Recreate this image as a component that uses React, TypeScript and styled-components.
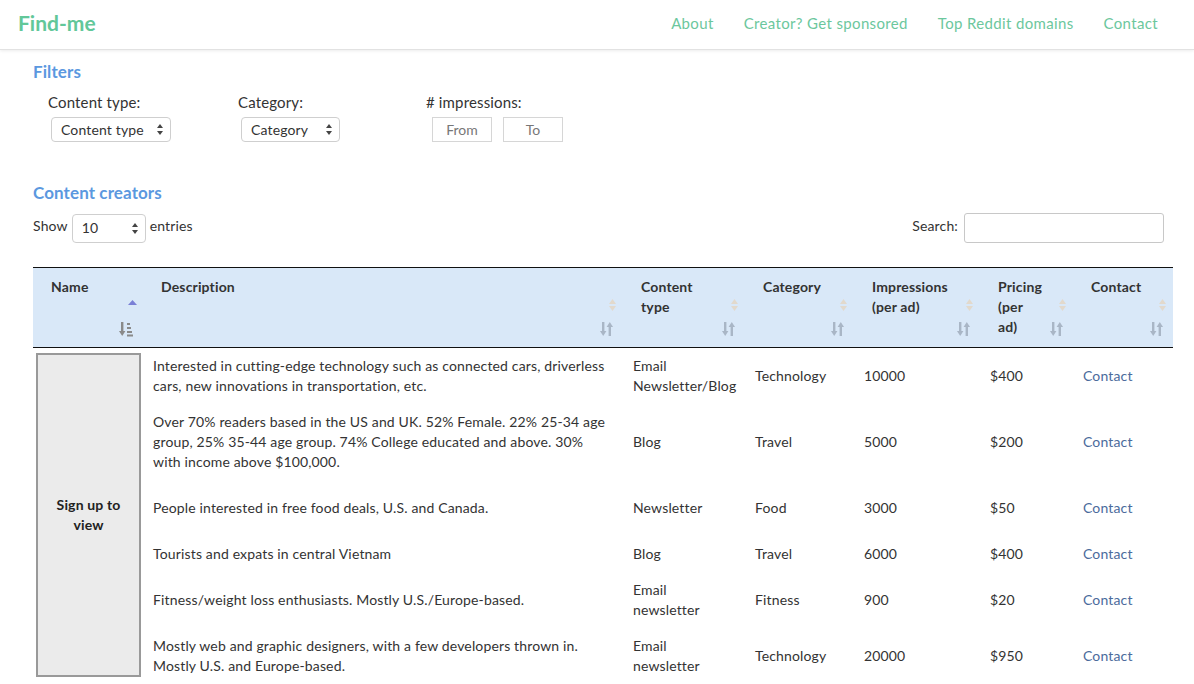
import React from "react";
import styled, { createGlobalStyle } from "styled-components";

const Global = createGlobalStyle`
  html, body { margin: 0; padding: 0; background: #fff; }
  body { font-family: Lato, "Open Sans", "Liberation Sans", sans-serif; color: #333; letter-spacing: 0.15px; }
  * { box-sizing: border-box; }
`;

const TopBar = styled.header`
  height: 50px;
  display: flex;
  align-items: center;
  justify-content: space-between;
  padding: 0 36px 0 18px;
  border-bottom: 1px solid #e2e2e2;
  box-shadow: 0 1px 3px rgba(0, 0, 0, 0.08);
`;

const Logo = styled.div`
  font-size: 21px;
  font-weight: 700;
  color: #62c799;
  letter-spacing: 0;
  margin-top: -4px;
`;

const Nav = styled.nav`
  display: flex;
  gap: 30px;
  margin-top: -4px;
`;

const NavLink = styled.a`
  font-size: 15px;
  letter-spacing: 0.35px;
  color: #6cc79d;
  text-decoration: none;
`;

const Main = styled.main`
  padding: 0 21px 0 33px;
`;

const SectionTitle = styled.h2<{ $top: number }>`
  margin: ${(p) => p.$top}px 0 0 0;
  font-size: 17px;
  line-height: 20px;
  font-weight: 700;
  letter-spacing: 0.1px;
  color: #5b98df;
`;

const FilterRow = styled.div`
  display: flex;
  padding-left: 15px;
  margin-top: 10px;
`;

const FilterGroup = styled.div<{ $w: number }>`
  width: ${(p) => p.$w}px;
  display: flex;
  flex-direction: column;
  gap: 5px;
`;

const FilterLabel = styled.div`
  font-size: 15px;
  line-height: 20px;
  color: #333;
`;

const SelectBox = styled.div<{ $w: number; $h: number; $pad: number; $ml?: number }>`
  width: ${(p) => p.$w}px;
  height: ${(p) => p.$h}px;
  margin-left: ${(p) => p.$ml ?? 3}px;
  border: 1.5px solid #cfcfcf;
  border-radius: 4px;
  background: #fff;
  display: flex;
  align-items: center;
  justify-content: space-between;
  padding: 0 7px 0 ${(p) => p.$pad}px;
  font-size: 14px;
  color: #333;
`;

const Stepper = () => (
  <svg width="6" height="11" viewBox="0 0 6 11">
    <path d="M3 0 L6 4 L0 4 Z" fill="#444" />
    <path d="M3 11 L6 7 L0 7 Z" fill="#444" />
  </svg>
);

const RangeRow = styled.div`
  display: flex;
  gap: 11px;
  margin-left: 6px;
`;

const RangeInput = styled.input`
  width: 60px;
  height: 25px;
  border: 1.5px solid #d6d6d6;
  border-radius: 0;
  text-align: center;
  font-family: inherit;
  font-size: 14px;
  padding: 0;
  &::placeholder { color: #777; }
`;

const ToolRow = styled.div`
  display: flex;
  align-items: center;
  justify-content: space-between;
  margin-top: 10px;
  padding-right: 9px;
  font-size: 14px;
  line-height: 18px;
`;

const LengthCtl = styled.div`
  display: flex;
  align-items: center;
  gap: 4px;
  & > span { margin-top: -4px; }
`;

const SearchCtl = styled.label`
  display: flex;
  align-items: center;
  gap: 6px;
  & > span { margin-top: -4px; }
`;

const SearchInput = styled.input`
  width: 200px;
  height: 30px;
  border: 1px solid #c8c8c8;
  border-radius: 3px;
`;

const Table = styled.table`
  width: 100%;
  margin-top: 24px;
  border-collapse: collapse;
  table-layout: fixed;
  font-size: 14px;
`;

const HeadRow = styled.tr`
  background: #d9e8f8;
  border-top: 1px solid #111;
  border-bottom: 1px solid #111;
`;

const Th = styled.th`
  position: relative;
  text-align: left;
  vertical-align: top;
  padding: 9px 18px 10px;
  height: 79px;
  font-weight: 700;
  line-height: 20px;
  color: #333;
`;

const SortTri = styled.span`
  position: absolute;
  right: 6px;
  top: 31px;
  display: flex;
`;

const SortIcon = styled.span`
  position: absolute;
  right: 10px;
  bottom: 10px;
  display: flex;
`;

const Td = styled.td<{ $pad?: number }>`
  padding: ${(p) => p.$pad ?? 8}px 10px;
  vertical-align: middle;
  line-height: 20px;
  color: #333;
`;

const NameCell = styled.td`
  padding: 5px 2px 6px 3px;
  vertical-align: top;
`;

const SignUpBox = styled.div`
  height: 324px;
  background: #ebebeb;
  border: 2px solid #999;
  display: flex;
  align-items: center;
  justify-content: center;
  text-align: center;
  font-weight: 700;
  line-height: 20px;
  color: #222;
  padding: 0 10px;
`;

const ContactLink = styled.a`
  color: #4b6b9c;
  text-decoration: none;
`;

const TriPair = ({ active }: { active?: boolean }) =>
  active ? (
    <svg width="9" height="12" viewBox="0 0 9 12">
      <path d="M4.5 1 L9 6 L0 6 Z" fill="#7a80d6" />
    </svg>
  ) : (
    <svg width="9" height="12" viewBox="0 0 9 12">
      <path d="M4.5 0 L8 5 L1 5 Z" fill="#e2d9cc" />
      <path d="M4.5 12 L8 7 L1 7 Z" fill="#e2d9cc" />
    </svg>
  );

const SortGlyph = ({ active }: { active?: boolean }) =>
  active ? (
    <svg width="14" height="16" viewBox="0 0 14 16">
      <rect x="2" y="1" width="2.4" height="11" fill="#8a8a8a" />
      <path d="M0 10 L6.4 10 L3.2 15 Z" fill="#8a8a8a" />
      <rect x="8" y="2" width="3" height="2" fill="#8a8a8a" />
      <rect x="8" y="6" width="4" height="2" fill="#8a8a8a" />
      <rect x="8" y="10" width="5" height="2" fill="#8a8a8a" />
      <rect x="8" y="13.5" width="6" height="2" fill="#8a8a8a" />
    </svg>
  ) : (
    <svg width="13" height="16" viewBox="0 0 13 16">
      <rect x="2" y="1" width="2.4" height="10" fill="#a9b6c6" />
      <path d="M0 10 L6.4 10 L3.2 15 Z" fill="#a9b6c6" />
      <rect x="8.6" y="5" width="2.4" height="10" fill="#a9b6c6" />
      <path d="M6.6 6 L13 6 L9.8 1 Z" fill="#a9b6c6" />
    </svg>
  );

const headers: { label: React.ReactNode; w: number; active?: boolean }[] = [
  { label: "Name", w: 110, active: true },
  { label: "Description", w: 480 },
  { label: <>Content<br />type</>, w: 122 },
  { label: "Category", w: 109 },
  { label: <>Impressions<br />(per ad)</>, w: 126 },
  { label: <>Pricing<br />(per<br />ad)</>, w: 93 },
  { label: "Contact", w: 100 },
];

const rows: { desc: React.ReactNode; type: React.ReactNode; cat: string; imp: string; price: string; pad?: number }[] = [
  {
    desc: "Interested in cutting-edge technology such as connected cars, driverless cars, new innovations in transportation, etc.",
    type: <>Email<br />Newsletter/Blog</>,
    cat: "Technology",
    imp: "10000",
    price: "$400",
  },
  {
    desc: <>Over 70% readers based in the US and UK. 52% Female. 22% 25-34 age group, 25% 35-44 age group. 74% College educated and above. 30%<br />with income above $100,000.</>,
    type: "Blog",
    cat: "Travel",
    imp: "5000",
    price: "$200",
  },
  {
    desc: "People interested in free food deals, U.S. and Canada.",
    type: "Newsletter",
    cat: "Food",
    imp: "3000",
    price: "$50",
    pad: 18,
  },
  {
    desc: "Tourists and expats in central Vietnam",
    type: "Blog",
    cat: "Travel",
    imp: "6000",
    price: "$400",
  },
  {
    desc: "Fitness/weight loss enthusiasts. Mostly U.S./Europe-based.",
    type: <>Email<br />newsletter</>,
    cat: "Fitness",
    imp: "900",
    price: "$20",
  },
  {
    desc: "Mostly web and graphic designers, with a few developers thrown in. Mostly U.S. and Europe-based.",
    type: <>Email<br />newsletter</>,
    cat: "Technology",
    imp: "20000",
    price: "$950",
  },
];

export default function App() {
  return (
    <>
      <Global />
      <TopBar>
        <Logo>Find-me</Logo>
        <Nav>
          <NavLink href="#">About</NavLink>
          <NavLink href="#">Creator? Get sponsored</NavLink>
          <NavLink href="#">Top Reddit domains</NavLink>
          <NavLink href="#">Contact</NavLink>
        </Nav>
      </TopBar>
      <Main>
        <SectionTitle $top={12}>Filters</SectionTitle>
        <FilterRow>
          <FilterGroup $w={190}>
            <FilterLabel>Content type:</FilterLabel>
            <SelectBox $w={120} $h={25} $pad={9}>
              Content type <Stepper />
            </SelectBox>
          </FilterGroup>
          <FilterGroup $w={188}>
            <FilterLabel>Category:</FilterLabel>
            <SelectBox $w={99} $h={25} $pad={9}>
              Category <Stepper />
            </SelectBox>
          </FilterGroup>
          <FilterGroup $w={200}>
            <FilterLabel># impressions:</FilterLabel>
            <RangeRow>
              <RangeInput placeholder="From" />
              <RangeInput placeholder="To" />
            </RangeRow>
          </FilterGroup>
        </FilterRow>
        <SectionTitle $top={41}>Content creators</SectionTitle>
        <ToolRow>
          <LengthCtl>
            <span>Show</span>
            <SelectBox $w={74} $h={29} $pad={9} $ml={0}>
              10 <Stepper />
            </SelectBox>
            <span>entries</span>
          </LengthCtl>
          <SearchCtl>
            <span>Search:</span>
            <SearchInput />
          </SearchCtl>
        </ToolRow>
        <Table>
          <colgroup>
            {headers.map((h, i) => (
              <col key={i} style={{ width: h.w }} />
            ))}
          </colgroup>
          <thead>
            <HeadRow>
              {headers.map((h, i) => (
                <Th key={i}>
                  {h.label}
                  <SortTri>
                    <TriPair active={h.active} />
                  </SortTri>
                  <SortIcon>
                    <SortGlyph active={h.active} />
                  </SortIcon>
                </Th>
              ))}
            </HeadRow>
          </thead>
          <tbody>
            {rows.map((r, i) => (
              <tr key={i}>
                {i === 0 && (
                  <NameCell rowSpan={rows.length}>
                    <SignUpBox>Sign up to view</SignUpBox>
                  </NameCell>
                )}
                <Td $pad={r.pad}>{r.desc}</Td>
                <Td $pad={r.pad}>{r.type}</Td>
                <Td $pad={r.pad}>{r.cat}</Td>
                <Td $pad={r.pad}>{r.imp}</Td>
                <Td $pad={r.pad}>{r.price}</Td>
                <Td $pad={r.pad}>
                  <ContactLink href="#">Contact</ContactLink>
                </Td>
              </tr>
            ))}
          </tbody>
        </Table>
      </Main>
    </>
  );
}
